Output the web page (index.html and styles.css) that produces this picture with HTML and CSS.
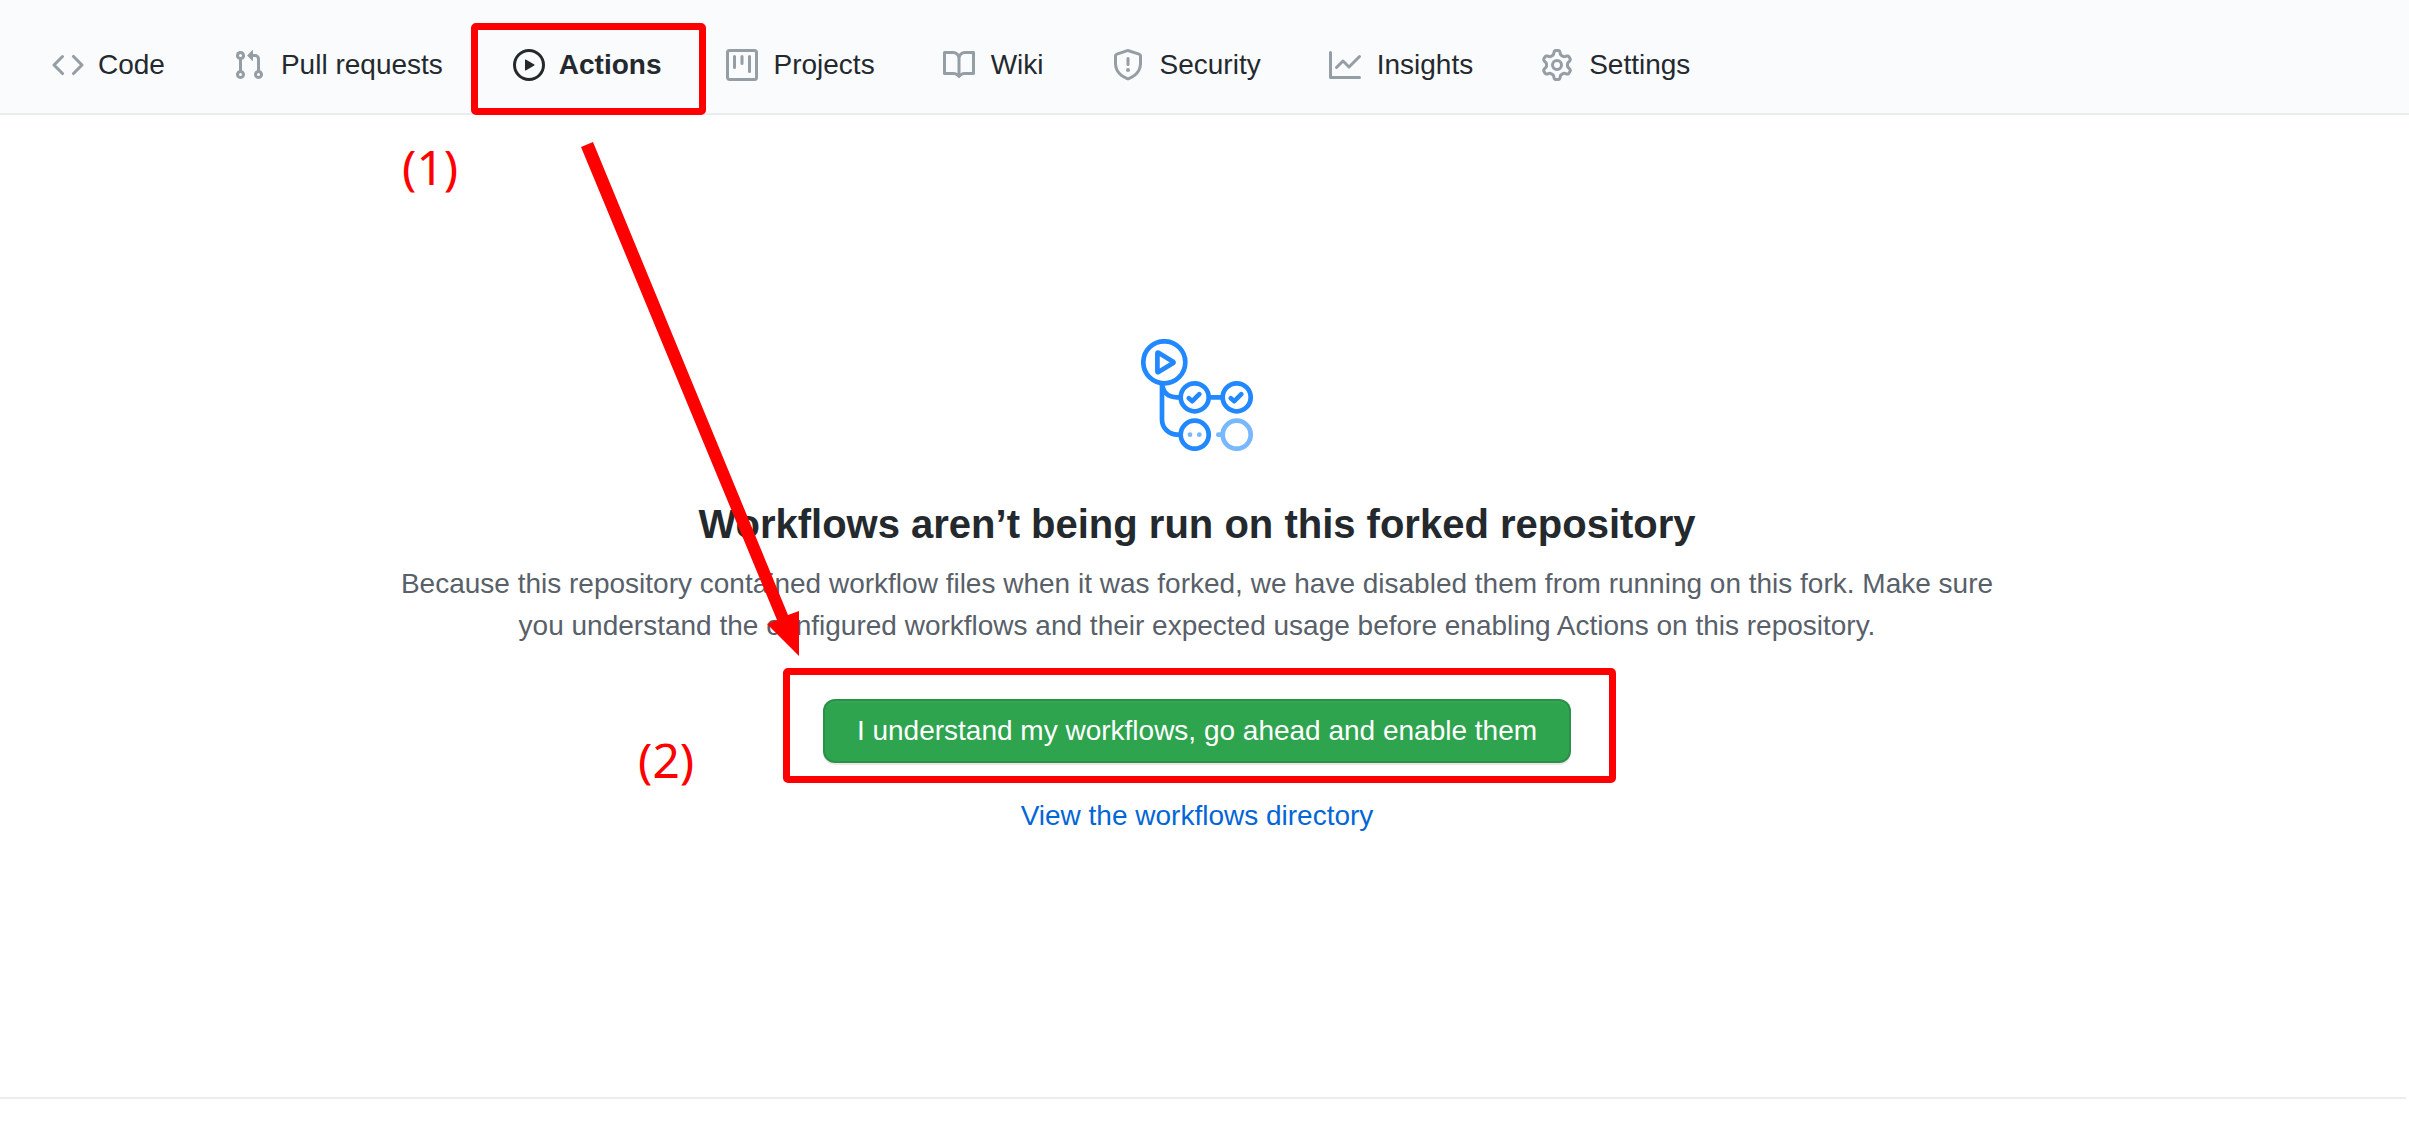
FILE: index.html
```html
<!DOCTYPE html>
<html lang="en">
<head>
<meta charset="utf-8">
<meta name="viewport" content="width=device-width, initial-scale=1">
<title>Actions</title>
<link rel="stylesheet" href="styles.css">
</head>
<body>
<nav class="repo-nav" aria-label="Repository">
  <a class="tab tab-tight" href="#code">
    <svg class="icon" viewBox="0 0 16 16" aria-hidden="true"><path d="M4.72 3.22a.75.75 0 011.06 1.06L2.06 8l3.72 3.72a.75.75 0 11-1.06 1.06L.47 8.53a.75.75 0 010-1.06l4.25-4.25zm6.56 0a.75.75 0 10-1.06 1.06L13.94 8l-3.72 3.72a.75.75 0 101.06 1.06l4.25-4.25a.75.75 0 000-1.06l-4.25-4.25z"/></svg>
    <span>Code</span>
  </a>
  <a class="tab" href="#pulls">
    <svg class="icon" viewBox="0 0 16 16" aria-hidden="true"><path fill-rule="evenodd" d="M7.177 3.073L9.573.677A.25.25 0 0110 .854v4.792a.25.25 0 01-.427.177L7.177 3.427a.25.25 0 010-.354zM3.75 2.5a.75.75 0 100 1.5.75.75 0 000-1.5zm-2.25.75a2.25 2.25 0 113 2.122v5.256a2.251 2.251 0 11-1.5 0V5.372A2.25 2.25 0 011.5 3.25zM11 2.5h-1V4h1a1 1 0 011 1v5.628a2.251 2.251 0 101.5 0V5A2.5 2.5 0 0011 2.5zm1 10.25a.75.75 0 111.5 0 .75.75 0 01-1.5 0zM3.75 12a.75.75 0 100 1.5.75.75 0 000-1.5z"/></svg>
    <span>Pull requests</span>
  </a>
  <a class="tab tab-tight tab-current" href="#actions" aria-current="page">
    <svg class="icon" viewBox="0 0 16 16" aria-hidden="true"><path fill-rule="evenodd" d="M1.5 8a6.5 6.5 0 1113 0 6.5 6.5 0 01-13 0zM8 0a8 8 0 100 16A8 8 0 008 0zM6.379 5.227A.25.25 0 006 5.442v5.117a.25.25 0 00.379.214l4.264-2.559a.25.25 0 000-.428L6.379 5.227z"/></svg>
    <span>Actions</span>
  </a>
  <a class="tab" href="#projects">
    <svg class="icon" viewBox="0 0 16 16" aria-hidden="true"><path fill-rule="evenodd" d="M1.75 0A1.75 1.75 0 000 1.75v12.5C0 15.216.784 16 1.75 16h12.5A1.75 1.75 0 0016 14.25V1.75A1.75 1.75 0 0014.25 0H1.75zM1.5 1.75a.25.25 0 01.25-.25h12.5a.25.25 0 01.25.25v12.5a.25.25 0 01-.25.25H1.75a.25.25 0 01-.25-.25V1.75zM11.75 3a.75.75 0 00-.75.75v7.5a.75.75 0 001.5 0v-7.5a.75.75 0 00-.75-.75zm-8.25.75a.75.75 0 011.5 0v5.5a.75.75 0 01-1.5 0v-5.5zM8 3a.75.75 0 00-.75.75v3.5a.75.75 0 001.5 0v-3.5A.75.75 0 008 3z"/></svg>
    <span>Projects</span>
  </a>
  <a class="tab" href="#wiki">
    <svg class="icon" viewBox="0 0 16 16" aria-hidden="true"><path fill-rule="evenodd" d="M0 1.75A.75.75 0 01.75 1h4.253c1.227 0 2.317.59 3 1.501A3.744 3.744 0 0111.006 1h4.245a.75.75 0 01.75.75v10.5a.75.75 0 01-.75.75h-4.507a2.25 2.25 0 00-1.591.659l-.622.621a.75.75 0 01-1.06 0l-.622-.621A2.25 2.25 0 005.258 13H.75a.75.75 0 01-.75-.75V1.75zm8.755 3a2.25 2.25 0 012.25-2.25H14.5v9h-3.757c-.71 0-1.4.201-1.992.572l.004-7.322zm-1.504 7.324l.004-5.073-.002-2.253A2.25 2.25 0 005.003 2.5H1.5v9h3.757a3.75 3.75 0 011.994.574z"/></svg>
    <span>Wiki</span>
  </a>
  <a class="tab" href="#security">
    <svg class="icon" viewBox="0 0 16 16" aria-hidden="true"><path fill-rule="evenodd" d="M7.467.133a1.75 1.75 0 011.066 0l5.25 1.68A1.75 1.75 0 0115 3.48V7c0 1.566-.32 3.182-1.303 4.682-.983 1.498-2.585 2.813-5.032 3.855a1.7 1.7 0 01-1.33 0c-2.447-1.042-4.049-2.357-5.032-3.855C1.32 10.182 1 8.566 1 7V3.48a1.75 1.75 0 011.217-1.667l5.25-1.68zm.61 1.429a.25.25 0 00-.153 0l-5.25 1.68a.25.25 0 00-.174.238V7c0 1.358.275 2.666 1.057 3.86.784 1.194 2.121 2.34 4.366 3.297a.2.2 0 00.154 0c2.245-.956 3.582-2.104 4.366-3.298C13.225 9.666 13.5 8.36 13.5 7V3.48a.25.25 0 00-.174-.237l-5.25-1.68zM9 10.5a1 1 0 11-2 0 1 1 0 012 0zm-.25-5.75a.75.75 0 10-1.5 0v3a.75.75 0 001.5 0v-3z"/></svg>
    <span>Security</span>
  </a>
  <a class="tab" href="#insights">
    <svg class="icon" viewBox="0 0 16 16" aria-hidden="true"><path fill-rule="evenodd" d="M1.5 1.75a.75.75 0 00-1.5 0v12.5c0 .414.336.75.75.75h14.5a.75.75 0 000-1.5H1.5V1.75zm14.28 2.53a.75.75 0 00-1.06-1.06L10 7.94 7.53 5.47a.75.75 0 00-1.06 0L3.22 8.72a.75.75 0 001.06 1.06L7 7.06l2.47 2.47a.75.75 0 001.06 0l5.25-5.25z"/></svg>
    <span>Insights</span>
  </a>
  <a class="tab" href="#settings">
    <svg class="icon" viewBox="0 0 16 16" aria-hidden="true"><path fill-rule="evenodd" d="M7.429 1.525a6.593 6.593 0 011.142 0c.036.003.108.036.137.146l.289 1.105c.147.56.55.967.997 1.189.174.086.341.183.501.29.417.278.97.423 1.53.27l1.102-.303c.11-.03.175.016.195.046.219.31.41.641.573.989.014.031.022.11-.059.19l-.815.806c-.411.406-.562.957-.53 1.456a4.588 4.588 0 010 .582c-.032.499.119 1.05.53 1.456l.815.806c.08.08.073.159.059.19a6.494 6.494 0 01-.573.99c-.02.029-.086.074-.195.045l-1.103-.303c-.559-.153-1.112-.008-1.529.27-.16.107-.327.204-.5.29-.449.222-.851.628-.998 1.189l-.289 1.105c-.029.11-.101.143-.137.146a6.613 6.613 0 01-1.142 0c-.036-.003-.108-.037-.137-.146l-.289-1.105c-.147-.56-.55-.967-.997-1.189a4.502 4.502 0 01-.501-.29c-.417-.278-.97-.423-1.53-.27l-1.102.303c-.11.03-.175-.016-.195-.046a6.492 6.492 0 01-.573-.989c-.014-.031-.022-.11.059-.19l.815-.806c.411-.406.562-.957.53-1.456a4.587 4.587 0 010-.582c.032-.499-.119-1.05-.53-1.456l-.815-.806c-.08-.08-.073-.159-.059-.19a6.44 6.44 0 01.573-.99c.02-.029.086-.075.195-.045l1.103.303c.559.153 1.112.008 1.529-.27.16-.107.327-.204.5-.29.449-.222.851-.628.998-1.189l.289-1.105c.029-.11.101-.143.137-.146zM8 0c-.236 0-.47.01-.701.03-.743.065-1.29.615-1.458 1.261l-.29 1.106c-.017.066-.078.158-.211.224a5.994 5.994 0 00-.668.386c-.123.082-.233.09-.3.071L3.27 2.776c-.644-.177-1.392.02-1.82.63a7.977 7.977 0 00-.704 1.217c-.315.675-.111 1.422.363 1.891l.815.806c.05.048.098.147.088.294a6.084 6.084 0 000 .772c.01.147-.038.246-.088.294l-.815.806c-.474.469-.678 1.216-.363 1.891.2.428.436.835.704 1.218.428.609 1.176.806 1.82.63l1.103-.303c.066-.019.176-.011.299.071.213.143.436.272.668.386.133.066.194.158.212.224l.289 1.106c.169.646.715 1.196 1.458 1.26a8.094 8.094 0 001.402 0c.743-.064 1.29-.614 1.458-1.26l.29-1.106c.017-.066.078-.158.211-.224a5.98 5.98 0 00.668-.386c.123-.082.233-.09.3-.071l1.102.302c.644.177 1.392-.02 1.82-.63.268-.382.505-.789.704-1.217.315-.675.111-1.422-.364-1.891l-.814-.806c-.05-.048-.098-.147-.088-.294a6.1 6.1 0 000-.772c-.01-.147.039-.246.088-.294l.814-.806c.475-.469.679-1.216.364-1.891a7.992 7.992 0 00-.704-1.218c-.428-.609-1.176-.806-1.82-.63l-1.103.303c-.066.019-.176.011-.299-.071a5.991 5.991 0 00-.668-.386c-.133-.066-.194-.158-.212-.224L10.16 1.29C9.99.645 9.444.095 8.701.031A8.094 8.094 0 008 0zm1.5 8a1.5 1.5 0 11-3 0 1.5 1.5 0 013 0zM11 8a3 3 0 11-6 0 3 3 0 016 0z"/></svg>
    <span>Settings</span>
  </a>
</nav>

<main class="content">
  <section class="blankslate">
    <svg class="illustration" viewBox="0 0 112 112" fill="none" stroke="#2188ff" stroke-width="4.7" stroke-linecap="round" stroke-linejoin="round" aria-hidden="true">
      <path d="M21 45v35.700a15.500 15 0 0 0 15.500 15h2M21 45q2 13.300 15 13.300h2M70 58.300h10"/>
      <circle cx="23.300" cy="23.300" r="21"/>
      <path d="M16.400 14.200v18.400q0 1 1 .5l14.800-9.100q.8-.6 0-1.200L17.400 13.700q-1-.5-1 .5z"/>
      <circle cx="53.700" cy="58.300" r="14"/>
      <circle cx="95.700" cy="58.300" r="14"/>
      <circle cx="53.700" cy="95.700" r="14"/>
      <path d="M47.800 59.200l3.500 3 7-7M89.800 59.200l3.500 3 7-7"/>
      <g stroke="#79b8ff"><circle cx="95.700" cy="95.700" r="14"/><path d="M77.300 95.700h3"/></g>
      <g fill="#79b8ff" stroke="none"><circle cx="49" cy="95.700" r="2.400"/><circle cx="58.300" cy="95.700" r="2.400"/></g>
    </svg>
    <h1 class="title">Workflows aren’t being run on this forked repository</h1>
    <p class="lead">Because this repository contained workflow files when it was forked, we have disabled them from running on this fork. Make sure you understand the configured workflows and their expected usage before enabling Actions on this repository.</p>
    <div class="enable"><button class="button" type="button">I understand my workflows, go ahead and enable them</button></div>
    <a class="link" href="#workflows">View the workflows directory</a>
    <span class="step step-one">(1)</span>
    <span class="step step-two">(2)</span>
    <svg class="arrow" viewBox="0 0 218 514" aria-hidden="true"><path d="M0 5L12 0L207 473L218 469V514L186 482L196 478z"/></svg>
  </section>
</main>
<footer class="footer"></footer>
</body>
</html>
```
FILE: styles.css
```css
* {
  box-sizing: border-box;
}

body {
  margin: 0;
  background: #fff;
  color: #24292e;
  font: 28px/42px "Liberation Sans", Arial, sans-serif;
}

a {
  color: #0366d6;
  text-decoration: none;
}

.repo-nav {
  display: flex;
  gap: 68px;
  padding: 44px 52px 27px;
  background: #fafbfc;
  border-bottom: 2px solid #eaecef;
}

.tab {
  display: flex;
  align-items: center;
  gap: 16px;
  color: #24292e;
  white-space: nowrap;
}

.tab-tight {
  gap: 14px;
}

.tab-current {
  position: relative;
  margin: 0 -4px 0 2px;
  font-weight: 700;
}

.icon {
  width: 32px;
  height: 32px;
  flex: none;
  fill: #959da5;
}

.tab-current .icon {
  fill: #24292e;
}

/* Red frames drawn round the two controls to click */
.tab-current::after,
.enable::after {
  content: "";
  position: absolute;
  border: 7px solid #f00;
  border-radius: 5px;
  pointer-events: none;
}

.tab-current::after {
  inset: -21px -44px -29px -42px;
}

.enable::after {
  inset: -31px -45px -20px -40px;
}

.content {
  padding: 224px 15px 260px 0;
}

.blankslate {
  position: relative;
  display: flex;
  flex-direction: column;
  align-items: center;
  max-width: 1600px;
  margin: 0 auto;
  text-align: center;
}

.illustration {
  width: 112px;
  height: 112px;
}

.title {
  margin: 43px 0 9px;
  font-size: 40px;
  line-height: 60px;
}

.lead {
  margin: 0;
  color: #586069;
}

.enable {
  position: relative;
  margin: 52px 0 32px;
}

.button {
  display: block;
  padding: 9px 32px;
  border: 2px solid rgba(27, 31, 35, 0.15);
  border-radius: 12px;
  background: #2ea44f;
  box-shadow: 0 2px 0 rgba(27, 31, 35, 0.1), inset 0 2px 0 rgba(255, 255, 255, 0.03);
  color: #fff;
  font: inherit;
}

.footer {
  margin-right: 3px;
  border-top: 2px solid #eaecef;
}

/* Step numbers and arrow laid over the page */
.step {
  position: absolute;
  color: #f00;
  font: 48px/48px "Noto Sans", sans-serif;
}

.step-one {
  top: -196px;
  left: 5px;
}

.step-two {
  top: 397px;
  left: 241px;
}

.arrow {
  position: absolute;
  top: -197px;
  left: 184px;
  width: 218px;
  height: 514px;
  fill: #f00;
}
```
